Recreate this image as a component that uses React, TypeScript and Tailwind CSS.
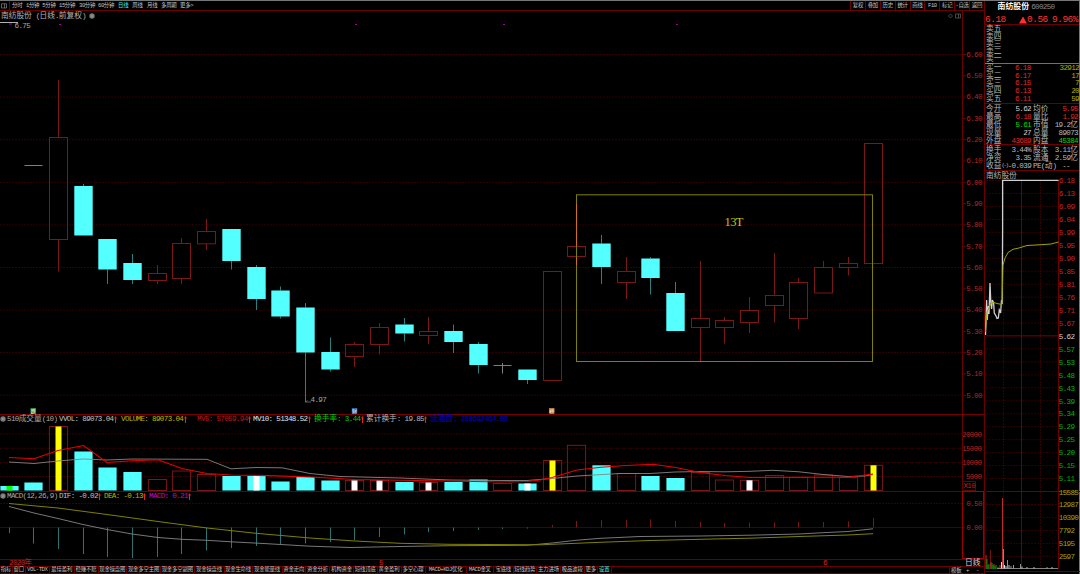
import { Fragment } from "react";
import { clsx } from "clsx";

type Point = [number, number];
type Kind = "up" | "down" | "flat";

interface Candle {
  i: number;
  kind: Kind;
  high: number;
  top: number;
  bottom: number;
  low: number;
}

interface VolumeBar {
  kind: Kind;
  top: number;
  core?: string;
}

const RED = "#7c1717";
const LABEL = "#b42424";
const GRID = "#340000";
const FRAME = "#6a0000";
const CYAN = "#54ffff";

const cx = (i: number) => 9.2 + i * 24.68;
const toPoints = (pts: Point[]) => pts.map((p) => p.join(",")).join(" ");

const candle = (i: number, kind: Kind, high: number, top: number, bottom: number, low: number): Candle => ({
  i, kind, high, top, bottom, low,
});

const candles: Candle[] = [
  candle(1, "flat", 165.5, 165.5, 165.5, 165.5),
  candle(2, "up", 80, 137.5, 239.5, 271.5),
  candle(3, "down", 184, 186, 235.5, 235.5),
  candle(4, "down", 239, 239, 269.5, 284),
  candle(5, "down", 254, 263, 280, 284),
  candle(6, "up", 265, 273.5, 280.5, 284),
  candle(7, "up", 238, 243.5, 278.5, 284),
  candle(8, "up", 219, 231.5, 243.8, 250),
  candle(9, "down", 229, 229, 261, 269.5),
  candle(10, "down", 265, 267, 299, 310),
  candle(11, "down", 286.5, 290.5, 316.5, 318.5),
  candle(12, "down", 303, 307.5, 352.5, 402),
  candle(13, "down", 337.5, 352, 369.5, 371.5),
  candle(14, "up", 342, 344.5, 356.5, 367),
  candle(15, "up", 323, 327.5, 344.5, 354.5),
  candle(16, "down", 318, 324.5, 333.5, 341.5),
  candle(17, "up", 317, 331.5, 335.5, 344),
  candle(18, "down", 324.5, 331, 342, 353),
  candle(19, "down", 342, 344, 365, 373.5),
  candle(20, "flat", 363, 365.5, 365.5, 373.5),
  candle(21, "down", 369.5, 369.5, 380, 384),
  candle(22, "up", 271.5, 271.5, 380.5, 380.5),
  candle(23, "up", 204, 246.5, 256.5, 265),
  candle(24, "down", 235, 243.5, 267, 284),
  candle(25, "up", 257, 271.5, 282.5, 299),
  candle(26, "down", 257, 258.5, 278, 294.5),
  candle(27, "down", 282, 293, 331, 331),
  candle(28, "up", 261, 318.5, 327.5, 361),
  candle(29, "up", 317, 320.5, 327.5, 343.5),
  candle(30, "up", 297, 310.5, 322.5, 333),
  candle(31, "up", 253, 295.5, 305.5, 322.5),
  candle(32, "up", 278, 282.5, 318.5, 329),
  candle(33, "up", 261, 267.5, 293, 293),
  candle(34, "up", 257, 263.5, 267.5, 275.5),
  candle(35, "up", 143.5, 143.5, 263.5, 263.5),
];

const volumes: VolumeBar[] = [
  { kind: "down", top: 486, core: "#00ff00" },
  { kind: "down", top: 482.5 },
  { kind: "up", top: 426.5, core: "#ffff00" },
  { kind: "down", top: 451.5 },
  { kind: "down", top: 467.5 },
  { kind: "down", top: 472 },
  { kind: "up", top: 479.5 },
  { kind: "up", top: 471 },
  { kind: "up", top: 474.5 },
  { kind: "down", top: 476 },
  { kind: "down", top: 476, core: "#ffffff" },
  { kind: "down", top: 481.5 },
  { kind: "down", top: 477 },
  { kind: "down", top: 480.5 },
  { kind: "up", top: 480.5, core: "#ffffff" },
  { kind: "up", top: 480.5, core: "#ffffff" },
  { kind: "down", top: 482 },
  { kind: "up", top: 482.5, core: "#ffffff" },
  { kind: "down", top: 482 },
  { kind: "down", top: 479.5 },
  { kind: "up", top: 483.5 },
  { kind: "down", top: 483.5, core: "#ffffff" },
  { kind: "up", top: 460.5, core: "#ffff00" },
  { kind: "up", top: 445.3 },
  { kind: "down", top: 465.3 },
  { kind: "up", top: 473.5 },
  { kind: "down", top: 476 },
  { kind: "down", top: 478 },
  { kind: "up", top: 472.5 },
  { kind: "up", top: 480 },
  { kind: "up", top: 480.3, core: "#ffffff" },
  { kind: "up", top: 475.5 },
  { kind: "up", top: 477.5 },
  { kind: "up", top: 475 },
  { kind: "up", top: 477.5 },
  { kind: "up", top: 465.3, core: "#ffff00" },
];

const mv5: Point[] = [
  [9, 457.5], [34, 458.8], [58, 450.5], [83.5, 445.5], [107, 462.5], [132, 460.8], [158, 459.8], [182, 468.5],
  [207, 473.5], [231, 475], [268, 475.6], [310, 477], [355, 479.5], [400, 480.3], [450, 481], [500, 482],
  [527, 481.5], [540, 480], [552, 477.5], [577, 470], [601, 467.3], [626, 465.5], [653, 464.3], [676, 467.5],
  [700, 472.5], [725, 475.5], [750, 477.5], [799, 477.3], [848, 477.3], [873, 474],
];

const mv10: Point[] = [
  [9, 462], [34, 463.5], [58, 461], [83, 459], [107, 460], [132, 459], [207, 459.3], [231, 468.8], [256, 467.5],
  [282, 467.8], [310, 473.5], [340, 476.5], [400, 478], [450, 480], [500, 480.5], [527, 480.5], [552, 478.5],
  [577, 476], [620, 473.5], [650, 473.5], [675, 472], [700, 471.5], [725, 471.8], [750, 471.3], [773, 470.3],
  [799, 471.8], [823, 474.5], [848, 476.5], [865, 476], [873, 474.5],
];

const dif: Point[] = [
  [9, 506.5], [34, 513], [58, 518.5], [83, 524.5], [107, 529.5], [132, 534], [158, 537.5], [182, 539.3],
  [207, 540.3], [231, 541.8], [260, 543.3], [310, 546.2], [350, 547.5], [400, 546.5], [450, 545.7], [527, 545.3],
  [552, 543], [577, 540.2], [601, 538.3], [640, 536.5], [700, 536], [750, 535.2], [799, 534], [823, 532.7],
  [848, 531.5], [873, 528.8],
];

const dea: Point[] = [
  [9, 503.5], [58, 508], [107, 514.5], [158, 521.5], [207, 528], [256, 533.3], [310, 538], [355, 541],
  [400, 543.3], [450, 544.3], [540, 544.8], [600, 542.3], [650, 540.5], [700, 539.3], [750, 538.2], [799, 536.5],
  [848, 535], [873, 533.7],
];

const macdEnds = [
  533, 543.5, 549, 554, 557, 558, 557, 554, 550.5, 548, 546, 544, 543.5, 542, 540, 537, 534.5, 532, 531, 530, 529,
  528.5, 525, 521, 520, 520, 519.3, 521, 522, 523, 522.7, 522.7, 522, 522, 521.5, 518,
];

const intraday: Point[] = [
  [984.5, 335], [985, 318], [985.6, 300], [986.2, 320], [987.3, 306], [988, 314], [989, 283], [989.8, 302],
  [990.6, 309], [991.4, 300], [992.6, 303], [993.3, 313], [995, 316], [996, 318.5], [997.3, 318], [998.3, 310],
  [999.6, 313], [1000.5, 300], [1001.2, 304], [1001.6, 230], [1001.6, 180.3], [1057.5, 180.3],
];

const average: Point[] = [
  [984.5, 332], [986, 312], [988, 308], [990, 303], [993, 302.5], [996, 303.5], [1001, 304.5], [1002, 265],
  [1004, 258], [1007, 252.5], [1012, 249.3], [1018, 248], [1026, 245.5], [1040, 244.7], [1050, 244], [1057.5, 242],
];

const priceScale = [
  "6.18", "6.13", "6.09", "6.04", "5.99", "5.95", "5.90", "5.85", "5.81", "5.76", "5.71", "5.67", "5.62", "5.57",
  "5.53", "5.48", "5.43", "5.39", "5.34", "5.29", "5.25", "5.20", "5.15", "5.11",
];
const volumeScale = ["15585", "12987", "10390", "7792", "5195", "2597"];

const tickVolume: [number, number, string][] = [
  [985, 555, "#c03030"], [986, 559, "#00a000"], [987, 565, "#00a000"], [988, 564, "#00a000"],
  [989.4, 550, "#7c1717"], [990, 562, "#c03030"], [991, 563, "#00a000"], [992, 565, "#00a000"],
  [993, 564, "#c03030"], [994, 566, "#00a000"], [995, 565, "#00a000"], [997, 567, "#00a000"],
  [999, 565, "#c03030"], [1000.5, 562, "#e0e0e0"], [1002.4, 549, "#a0a0a0"], [1001.6, 498, "#d03030"],
  [1003.5, 565, "#e0e0e0"], [1005, 566, "#c0c0c0"], [1006.5, 560, "#909090"], [1008, 565, "#c0c0c0"],
  [1010, 566, "#909090"], [1012.5, 565, "#909090"], [1019.5, 564, "#909090"], [1021, 566.5, "#c0c0c0"],
  [1026, 567, "#c0c0c0"], [1033, 567, "#c0c0c0"], [1046, 567, "#909090"], [1051, 567, "#c0c0c0"],
];

const periods: [string, string][] = [
  ["分时", "w-[14px]"], ["1分钟", "w-[16.3px]"], ["5分钟", "w-[16.7px]"], ["15分钟", "w-[20px]"],
  ["30分钟", "w-[19px]"], ["60分钟", "w-[20px]"], ["日线", "w-[14.3px]"], ["周线", "w-[14.7px]"],
  ["月线", "w-[14px]"], ["多周期", "w-[19px]"], ["更多>", "w-[18px]"],
];

const tools = ["复权", "叠加", "历史", "统计", "画线", "F10", "标记", "-自选", "返回"];

const tabs: [string, string][] = [
  ["指标", "w-[13px]"], ["窗口", "w-[12.5px]"], ["VOL-TDX", "w-[24.5px]"], ["最佳盈利", "w-[24.5px]"],
  ["稳赚不赔", "w-[24px]"], ["现金操盘图", "w-[28.5px]"], ["现金多空主图", "w-[34px]"],
  ["现金多空副图", "w-[33.5px]"], ["现金操盘线", "w-[30px]"], ["现金生命线", "w-[28px]"],
  ["现金能量线", "w-[30px]"], ["资金走向", "w-[23.5px]"], ["资金分析", "w-[24px]"], ["机构资金", "w-[24px]"],
  ["短线顶底", "w-[23.5px]"], ["黄金盈利", "w-[24px]"], ["多空心理", "w-[24px]"], ["MACD+KDJ优化", "w-[41px]"],
  ["MACD金叉", "w-[27.5px]"], ["宝底线", "w-[19.5px]"], ["短线趋势", "w-[23.5px]"], ["主力进场", "w-[24px]"],
  ["极品波段", "w-[23.5px]"], ["更多", "w-[13.5px]"], ["设置", "w-[13.5px]"],
];

const sells = ["五", "四", "三", "二", "一"];
const buys: [string, string, string][] = [
  ["一", "6.18", "32912"], ["二", "6.17", "17"], ["三", "6.15", "7"], ["四", "6.13", "20"], ["五", "6.11", "59"],
];

const quotes: [string, string, string, string, string, string][] = [
  ["今开", "5.62", "text-[#d0d0d0]", "均价", "5.95", "text-[#e02828]"],
  ["最高", "6.18", "text-[#e02828]", "量比", "1.92", "text-[#e02828]"],
  ["最低", "5.61", "text-[#00d800]", "市值", "19.2亿", "text-[#b8b8b8]"],
  ["现量", "27", "text-[#d0d0d0]", "总量", "89073", "text-[#b8b8b8]"],
  ["外盘", "43689", "text-[#e02828]", "内盘", "45384", "text-[#00d800]"],
];

const finance: [string, string, string, string, string][] = [
  ["换手", "", "3.44%", "股本", "3.11亿"],
  ["净资", "", "3.35", "流通", "2.59亿"],
  ["收益", "(-)", "-0.039", "PE(动)", "--"],
];

// Latin glyphs are set at half the width of the Chinese ones
function Txt({ children, small }: { children: string; small?: boolean }) {
  const runs = children.match(/[\u3400-\u9fff]+|[^\u3400-\u9fff]+/g) ?? [];
  return (
    <>
      {runs.map((run, i) => (
        <span
          key={i}
          className={clsx(
            "whitespace-pre",
            /[\u3400-\u9fff]/.test(run)
              ? small ? "text-[5.4px] tracking-[-0.2px]" : "text-[7.7px]"
              : small ? "text-[5.6px] tracking-[-0.45px]" : "text-[7.6px] tracking-[-0.67px]"
          )}
        >
          {run}
        </span>
      ))}
    </>
  );
}

function Stat({ text, color, width }: { text: string; color: string; width: string }) {
  return (
    <span className={clsx("flex shrink-0 items-center whitespace-nowrap", color, width)}>
      <Txt>{text}</Txt>
      <svg className="ml-[0.5px] h-[7px] w-[3px] shrink-0" viewBox="0 0 3 7">
        <path d="M1.5 0L3 2.5H0Z" fill="#f02020" />
        <path d="M1.5 2V7" stroke="#f02020" />
      </svg>
    </span>
  );
}

function Gear() {
  return (
    <svg className="h-[6px] w-[6px] shrink-0" viewBox="0 0 6 6">
      <circle cx="3" cy="3" r="2.7" fill="#7a7a7a" />
      <circle cx="3" cy="3" r="0.8" fill="#aaa" />
    </svg>
  );
}

function Toolbar() {
  return (
    <div className="flex h-[10px] shrink-0 items-center border-b border-[#6a0000] leading-[8px] text-[#c4c4c4]">
      <svg className="ml-[1px] h-[6px] w-[7px]" viewBox="0 0 7 6">
        <path d="M0.5 0.8H5.5V5H0.5ZM3.5 0.8V5" fill="none" stroke="#777" strokeWidth="0.8" />
      </svg>
      <div className="mr-[2px] ml-[1px] h-full w-px bg-[#6a0000]" />
      {periods.map(([label, width]) => (
        <span key={label} className={clsx("shrink-0 whitespace-nowrap", width, label === "日线" && "text-[#45f0f0]")}>
          <Txt small>{label}</Txt>
        </span>
      ))}
      <div className="ml-auto flex h-full">
        {tools.map((label) => (
          <span
            key={label}
            className="flex w-[14.9px] items-center justify-center border-l border-[#6a0000] whitespace-nowrap"
          >
            <Txt small>{label}</Txt>
          </span>
        ))}
      </div>
    </div>
  );
}

function CandleChart() {
  const labels = Array.from({ length: 17 }, (_, i) => (6.6 - i * 0.1).toFixed(2));
  return (
    <svg className="block h-[394px] w-[984px] shrink-0 overflow-visible" viewBox="0 20 984 394">
      {Array.from({ length: 9 }, (_, i) => (
        <line key={i} x1={0} x2={962} y1={54.5 + i * 42.6} y2={54.5 + i * 42.6} stroke={GRID} strokeDasharray="2 1" />
      ))}
      <path d="M0 22.5H18" stroke="#b0b0b0" />
      <path d="M9 24h3M59 24.5h2M355 24.5h2M503 24.5h2M676 24.5h2" stroke="#a000a0" />
      <text x={14.5} y={27.8} fill="#a8a8a8" className="text-[7.6px] tracking-[-0.67px]">6.75</text>

      {candles.map(({ i, kind, high, top, bottom, low }) => {
        const x = Math.floor(cx(i)) + 0.5;
        if (kind === "flat") {
          return (
            <path key={i} d={`M${x - 9} ${top}H${x + 9}M${x} ${high}V${low}`} stroke="#808080" />
          );
        }
        const up = kind === "up";
        return (
          <Fragment key={i}>
            <path d={`M${x} ${high}V${top}M${x} ${bottom}V${low}`} stroke={up ? RED : "#2a8080"} />
            <rect
              x={up ? x - 9 : x - 9.2}
              y={top}
              width={up ? 18 : 18.4}
              height={bottom - top}
              fill={up ? "none" : CYAN}
              stroke={up ? RED : "none"}
            />
          </Fragment>
        );
      })}

      <rect x={576.5} y={194.8} width={296} height={166.7} fill="none" stroke="#808000" />
      <path d="M576.5 204V246M576.5 257V265" stroke="#d07010" />
      <text x={724.5} y={226} fill="#c4c414" textLength={19} className="font-['Liberation_Serif',serif] text-[12.5px]">
        13T
      </text>
      <path d="M305.5 402H311M305.5 402l2-1.5" stroke="#777" strokeWidth={0.8} fill="none" />
      <text x={310.5} y={402.3} fill="#a8a8a8" className="text-[7.6px] tracking-[-0.67px]">4.97</text>

      {[
        { x: 30.5, fill: "#2a8a3a", t: "跌" },
        { x: 351.8, fill: "#2860a0", t: "财" },
        { x: 549, fill: "#b07040", t: "榜" },
      ].map((m) => (
        <g key={m.t}>
          <rect x={m.x} y={408} width={5.5} height={5.5} fill={m.fill} />
          <text x={m.x + 0.3} y={412.6} fill="#fff" className="text-[5px]">{m.t}</text>
        </g>
      ))}

      <line x1={962.5} x2={962.5} y1={20} y2={414} stroke={FRAME} />
      {labels.map((label, i) => (
        <g key={label}>
          <line x1={963} x2={966} y1={54.5 + i * 21.3} y2={54.5 + i * 21.3} stroke={FRAME} />
          <text x={966.3} y={56.8 + i * 21.3} fill={LABEL} className="text-[7.6px] tracking-[-0.67px]">{label}</text>
        </g>
      ))}
    </svg>
  );
}

function VolumeChart() {
  return (
    <svg className="block h-[68px] w-[984px] shrink-0 overflow-visible" viewBox="0 423 984 68">
      {[434, 448.3, 462.5, 476.5].map((y, i) => (
        <g key={y}>
          <line x1={0} x2={963} y1={y} y2={y} stroke={GRID} strokeDasharray="2 1" />
          <text x={981.5} y={y + 2.5} textAnchor="end" fill={LABEL} className="text-[7.6px] tracking-[-0.67px]">
            {20000 - i * 5000}
          </text>
        </g>
      ))}
      {volumes.map(({ kind, top, core }, i) => {
        const x = Math.floor(cx(i)) + 0.5;
        const up = kind === "up";
        return (
          <Fragment key={i}>
            <rect
              x={x - 9.1}
              y={top}
              width={18.2}
              height={490.5 - top}
              fill={up ? "none" : CYAN}
              stroke={up ? RED : "none"}
            />
            {core && <rect x={x - 3} y={top} width={6} height={490.5 - top} fill={core} />}
          </Fragment>
        );
      })}
      <polyline points={toPoints(mv10)} fill="none" stroke="#858585" strokeWidth={0.9} />
      <polyline points={toPoints(mv5)} fill="none" stroke="#e80000" strokeWidth={1.1} />
      <line x1={962.5} x2={962.5} y1={414} y2={491} stroke={FRAME} />
      <rect x={962.5} y={481.5} width={13} height={9} fill="#000" stroke={FRAME} />
      <text x={963.5} y={488.2} fill={LABEL} className="text-[7.4px] tracking-[-0.6px]">X10</text>
    </svg>
  );
}

function MacdChart() {
  return (
    <svg className="block h-[59px] w-[984px] shrink-0 overflow-visible" viewBox="0 500 984 59">
      <line x1={0} x2={965} y1={503.5} y2={503.5} stroke={GRID} strokeDasharray="2 1" />
      <line x1={0} x2={965} y1={527.5} y2={527.5} stroke="#480000" />
      {macdEnds.map((y, i) => {
        const x = Math.floor(cx(i)) + 0.5;
        return <line key={i} x1={x} x2={x} y1={527.5} y2={y} stroke={i < 22 ? "#2a7474" : RED} />;
      })}
      <polyline points={toPoints(dif)} fill="none" stroke="#858585" strokeWidth={0.9} />
      <polyline points={toPoints(dea)} fill="none" stroke="#808000" />
      <rect x={962.5} y={491.5} width={21} height={67} fill="none" stroke="#a00000" />
      <text x={966.3} y={506} fill={LABEL} className="text-[7.6px] tracking-[-0.67px]">0.50</text>
      <text x={966.3} y={530} fill={LABEL} className="text-[7.6px] tracking-[-0.67px]">0.00</text>
    </svg>
  );
}

function IntradayChart() {
  const step = 12.96;
  return (
    <svg className="block h-[397px] w-[95px] shrink-0" viewBox="984 177 95 397">
      {Array.from({ length: 30 }, (_, i) => (
        <line key={i} x1={985} x2={1057} y1={180.5 + i * step} y2={180.5 + i * step} stroke={GRID} strokeDasharray="2 1" />
      ))}
      <path d="M1002.5 180V569M1039.5 180V569" stroke={GRID} strokeDasharray="2 1" />
      <path d="M1020.5 180V569M985 335.8H1057.5M985 491.5H1079M1057.5 180V569" stroke="#700000" />
      <path d="M984 571.5H1079" stroke={FRAME} />

      <polyline points={toPoints(intraday)} fill="none" stroke="#d0d0d0" strokeWidth={1.3} />
      <polyline points={toPoints(average)} fill="none" stroke="#a0a000" />

      {tickVolume.map(([x, y, color]) => (
        <line key={x} x1={x} x2={x} y1={569} y2={y} stroke={color} />
      ))}
      <line x1={996} x2={1057} y1={568.5} y2={568.5} stroke="#a0a0a0" strokeWidth={0.8} />

      {priceScale.map((label, i) => (
        <text
          key={label}
          x={1057.8}
          y={183.2 + i * step}
          fill={i < 12 ? "#c82424" : i === 12 ? "#d0d0d0" : "#00b400"}
          className="text-[7.6px] tracking-[-0.67px]"
        >
          {label}
        </text>
      ))}
      {volumeScale.map((label, i) => (
        <text key={label} x={1057.8} y={494.5 + i * step} fill="#a0a000" className="text-[7.6px] tracking-[-0.67px]">
          {label}
        </text>
      ))}
    </svg>
  );
}

function QuotePanel() {
  return (
    <div className="flex w-[96px] shrink-0 flex-col border-r border-l border-r-[#777] border-l-[#6a0000] leading-none text-[#b8b8b8]">
      <div className="flex h-[12px] shrink-0 items-center justify-center gap-[2px] pr-[12px]">
        <span className="shrink-0 text-[7.9px] font-bold text-white">南纺股份</span>
        <span className="pt-[2px] text-[7.6px] tracking-[-0.67px] text-[#8a8a8a]">600250</span>
      </div>
      <div className="flex h-[12px] shrink-0 items-center border-b border-[#6a0000] pt-[2px] text-[9.5px] tracking-[-0.5px] text-[#ff3838]">
        <span className="w-[34px]">6.18</span>
        <svg className="h-[8px] w-[8px]" viewBox="0 0 8 8">
          <path d="M4 0.5L8 7.5H0Z" fill="#ff3030" />
        </svg>
        <span className="w-[25px]">0.56</span>
        <span>9.96%</span>
      </div>

      <div className="flex h-[39px] shrink-0 flex-col border-b border-[#a06a10] pt-[1px] pl-[1px]">
        {sells.map((n) => (
          <div key={n} className="h-[7.5px] leading-[7.5px]">
            <Txt>{"卖" + n}</Txt>
          </div>
        ))}
      </div>
      <div className="flex h-[40px] shrink-0 flex-col border-b border-[#6a0000] pt-[1px] pl-[1px]">
        {buys.map(([n, price, amount]) => (
          <div key={n} className="flex h-[7.7px] leading-[7.7px]">
            <span className="w-[29px]"><Txt>{"买" + n}</Txt></span>
            <span className="text-[#e02828]"><Txt>{price}</Txt></span>
            <span className="ml-auto text-[#b0b000]"><Txt>{amount}</Txt></span>
          </div>
        ))}
      </div>

      <div className="flex h-[41px] shrink-0 flex-col border-b border-[#6a0000] pt-[0.5px] pr-[1px] pl-[1px]">
        {quotes.map(([a, av, aColor, b, bv, bColor]) => (
          <div key={a} className="flex h-[8px] leading-[8px]">
            <span className="w-[16px]"><Txt>{a}</Txt></span>
            <span className={clsx("w-[29px] text-right whitespace-nowrap", aColor)}>
              <Txt>{av}</Txt>
            </span>
            <span className="ml-[2px] whitespace-nowrap"><Txt>{b}</Txt></span>
            <span className={clsx("ml-auto whitespace-nowrap", bColor)}><Txt>{bv}</Txt></span>
          </div>
        ))}
      </div>
      <div className="flex h-[26px] shrink-0 flex-col border-b border-[#6a0000] pt-[1px] pr-[1px] pl-[1px]">
        {finance.map(([a, sign, av, b, bv]) => (
          <div key={a} className="flex h-[8.1px] leading-[8.1px]">
            <span className="flex w-[45px] shrink-0 justify-between whitespace-nowrap">
              <span className="flex">
                <Txt>{a}</Txt>
                {sign && <span className="text-[6px] tracking-[-1.5px]">{sign}</span>}
              </span>
              <span><Txt>{av}</Txt></span>
            </span>
            <span className="ml-[2px] whitespace-nowrap"><Txt>{b}</Txt></span>
            <span className={clsx("ml-auto whitespace-nowrap", bv === "--" && "pr-[8px]")}><Txt>{bv}</Txt></span>
          </div>
        ))}
      </div>
      <div className="h-[6px] shrink-0 pl-[1px] leading-[10px]"><Txt>南纺股份</Txt></div>
      <IntradayChart />
    </div>
  );
}

export default function App() {
  return (
    <div className="flex h-[574px] w-[1080px] overflow-hidden border-t border-[#777] bg-black font-['Liberation_Mono','Noto_Sans_CJK_SC',monospace] text-[7.7px]">
      <div className="flex w-[984px] shrink-0 flex-col">
        <Toolbar />

        <div className="flex h-[9px] shrink-0 items-center leading-[8px] text-[#b4b4b4]">
          <div className="flex w-[962px] items-center pl-[1px]">
            <span className="w-[87.5px] whitespace-nowrap"><Txt>南纺股份 (日线.前复权)</Txt></span>
            <Gear />
            <svg className="ml-auto h-[6px] w-[14px]" viewBox="0 0 14 6">
              <path d="M2.5 1L4.5 3L2.5 5L0.5 3Z" fill="none" stroke="#666" strokeWidth="0.7" />
              <path d="M7.5 1H12.5V5H7.5ZM10.5 1V5" fill="none" stroke="#666" strokeWidth="0.7" />
            </svg>
          </div>
          <div className="h-full w-px bg-[#6a0000]" />
        </div>
        <CandleChart />

        <div className="flex h-[9px] shrink-0 items-center border-t border-[#780000] leading-[8px]">
          <Gear />
          <span className="w-[53px] shrink-0 pl-[1px] whitespace-nowrap text-[#a8a8a8]"><Txt>510成交量(10)</Txt></span>
          <Stat text="VVOL: 89073.04" color="text-[#c0c0c0]" width="w-[62px]" />
          <Stat text="VOLUME: 89073.04" color="text-[#b8b800]" width="w-[76px]" />
          <Stat text="MV5: 57059.94" color="text-[#c41414]" width="w-[56px]" />
          <Stat text="MV10: 51348.52" color="text-[#e0e0e0]" width="w-[61px]" />
          <Stat text="换手率: 3.44" color="text-[#00c800]" width="w-[52px]" />
          <Stat text="累计换手: 19.85" color="text-[#b8b8b8]" width="w-[64px]" />
          <span className="flex items-center whitespace-nowrap text-[#0000d0]"><Txt>流通盘: 258692464.00</Txt></span>
        </div>
        <VolumeChart />

        <div className="flex h-[9px] shrink-0 items-center border-t border-[#6a0000] leading-[8px]">
          <Gear />
          <span className="w-[53px] shrink-0 pl-[1px] whitespace-nowrap text-[#a8a8a8]"><Txt>MACD(12,26,9)</Txt></span>
          <Stat text="DIF: -0.02" color="text-[#c0c0c0]" width="w-[45px]" />
          <Stat text="DEA: -0.13" color="text-[#b8b800]" width="w-[45px]" />
          <Stat text="MACD: 0.21" color="text-[#d000d0]" width="w-[50px]" />
        </div>
        <MacdChart />

        <div className="flex h-[7px] shrink-0 border-t border-[#6a0000] leading-[7px] text-[#d02424]">
          <span className="w-[379px] pl-[9px]"><Txt>2020年</Txt></span>
          <span className="w-[444px]"><Txt>5</Txt></span>
          <span className="w-[142px]"><Txt>6</Txt></span>
          <span className="text-[#d0d0d0]"><Txt>日线</Txt></span>
        </div>
        <div className="flex h-[8px] shrink-0 border-t border-b border-[#6a0000] leading-[6px] text-[#c4c4c4]">
          {tabs.map(([label, width]) => (
            <span
              key={label}
              className={clsx(
                "flex shrink-0 items-center justify-center border-r border-[#6a0000] whitespace-nowrap",
                width,
                label === "设置" && "text-[#45f0f0]"
              )}
            >
              <Txt small>{label}</Txt>
            </span>
          ))}
          <span className="ml-auto flex w-[35px] items-center border-l border-[#6a0000] pl-[1px]">
            <span className="w-[15px]"><Txt small>模板</Txt></span>
            <span className="w-[10px]"><Txt small>+</Txt></span>
            <span><Txt small>-</Txt></span>
          </span>
        </div>
      </div>
      <QuotePanel />
    </div>
  );
}
